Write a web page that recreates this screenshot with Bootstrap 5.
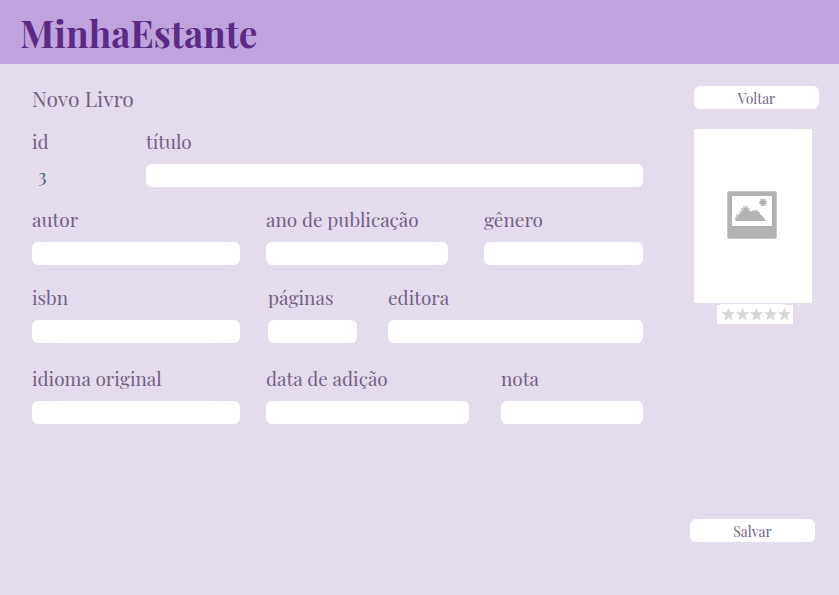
<!DOCTYPE html>
<html lang="pt-BR">
<head>
<meta charset="utf-8">
<meta name="viewport" content="width=device-width, initial-scale=1">
<title>MinhaEstante - Novo Livro</title>
<link href="https://cdn.jsdelivr.net/npm/bootstrap@5.3.0/dist/css/bootstrap.min.css" rel="stylesheet">
<style>
  body { background: #e4dcec; color: #735f86; font-family: "Playfair Display", "Liberation Serif", serif; }
  .topbar { background: #bfa3dc; padding: 3px 20px 1px; }
  .brand { color: #5b2a86; font-size: 37px; line-height: 60px; font-weight: 700; text-decoration: none; }
  .page { padding: 22px 20px 24px 32px; gap: 47px; }
  .page-title { font-size: 21px; line-height: 24px; margin-bottom: 18px; font-weight: 400; }
  .form-line { display: grid; margin-bottom: 19px; }
  .form-line > :nth-child(2) { grid-column: 3; }
  .form-line > :nth-child(3) { grid-column: 5; }
  .line-title { grid-template-columns: 88fr 26fr 497fr; }
  .line-author { grid-template-columns: 208fr 26fr 182fr 36fr 159fr; }
  .line-isbn { grid-template-columns: 208fr 28fr 89fr 31fr 255fr; margin-bottom: 22px; }
  .line-lang { grid-template-columns: 208fr 26fr 203fr 32fr 142fr; }
  .form-line > div { min-width: 0; }
  .field-label { display: block; font-size: 19px; line-height: 26px; margin-bottom: 10px; white-space: nowrap; }
  .field { height: 23px; border: 0; border-radius: 6px; padding: 0 8px; font-size: 14px; color: inherit; }
  .book-id { display: block; font-size: 19px; line-height: 23px; color: #42627a; padding-left: 6px; height: 23px; }
  .side { width: 129px; }
  .side-btn { width: 125px; height: 23px; border: 0; border-radius: 6px; background: #fff; color: inherit; font-size: 14px; line-height: 23px; padding: 1px 0 0; }
  .side-btn:hover { background: #f6f1fa; color: inherit; }
  .cover { width: 118px; height: 174px; margin: 20px 0 1px 4px; padding: 0 2px 2px 0; }
  .rating { margin: 0 0 195px 27px; }
</style>
</head>
<body>
<header class="topbar">
  <a class="brand d-block" href="#">MinhaEstante</a>
</header>
<form class="page d-flex align-items-start">
  <main class="flex-grow-1">
    <h1 class="page-title">Novo Livro</h1>
    <div class="form-line line-title">
      <div><label class="field-label" for="id">id</label><output class="book-id" id="id">3</output></div>
      <div><label class="field-label" for="titulo">título</label><input class="field form-control" type="text" id="titulo"></div>
    </div>
    <div class="form-line line-author">
      <div><label class="field-label" for="autor">autor</label><input class="field form-control" type="text" id="autor"></div>
      <div><label class="field-label" for="ano">ano de publicação</label><input class="field form-control" type="text" id="ano"></div>
      <div><label class="field-label" for="genero">gênero</label><input class="field form-control" type="text" id="genero"></div>
    </div>
    <div class="form-line line-isbn">
      <div><label class="field-label" for="isbn">isbn</label><input class="field form-control" type="text" id="isbn"></div>
      <div><label class="field-label" for="paginas">páginas</label><input class="field form-control" type="text" id="paginas"></div>
      <div><label class="field-label" for="editora">editora</label><input class="field form-control" type="text" id="editora"></div>
    </div>
    <div class="form-line line-lang">
      <div><label class="field-label" for="idioma">idioma original</label><input class="field form-control" type="text" id="idioma"></div>
      <div><label class="field-label" for="adicao">data de adição</label><input class="field form-control" type="text" id="adicao"></div>
      <div><label class="field-label" for="nota">nota</label><input class="field form-control" type="text" id="nota"></div>
    </div>
  </main>
  <aside class="side d-flex flex-column align-items-start flex-shrink-0">
    <button class="side-btn btn align-self-end" type="button">Voltar</button>
    <div class="cover bg-white d-flex align-items-center justify-content-center">
      <svg width="50" height="48" viewBox="0 0 50 48" aria-hidden="true">
        <rect width="50" height="48" rx="2" fill="#c9c9c9"/>
        <rect x="1" y="1" width="48" height="46" rx="1" fill="#b3b3b3"/>
        <rect x="5" y="5" width="40" height="30" fill="#fff"/>
        <path fill="#d2d2d2" d="M8 30v-4h1v-3h3v-3h2v-3h2v-2h5v2h2v3h2v-1h6v2h2v3h2v3h3v2h1v1z"/>
        <path fill="#b3b3b3" d="M9 30v-3l3-3 3-3 2-4h3l3 4h2l2-1h3l3 3 3 3 3 4z"/>
        <path fill="#d2d2d2" d="M32 10h1V8h6v2h1v3h-1v2h-6v-2h-1z"/>
        <path fill="#b3b3b3" d="M33 10h2V8h2v2h2v3h-2v2h-2v-2h-2z"/>
      </svg>
    </div>
    <svg class="rating d-block" width="76" height="20" viewBox="0 0 76 20" role="img" aria-label="Nota: 0 de 5">
      <path fill="#fff" d="M3 0h65v1h8v19H0V1h3z"/>
      <defs><path id="star" fill="#d5d5d5" d="M0-7L1.7-2.2 6.8-2.2 2.7.9 4.2 6 0 3-4.2 6-2.7.9-6.8-2.2-1.7-2.2z"/></defs>
      <use href="#star" x="11.5" y="10.5"/><use href="#star" x="25.5" y="10.5"/><use href="#star" x="39.5" y="10.5"/><use href="#star" x="53.5" y="10.5"/><use href="#star" x="67.5" y="10.5"/>
    </svg>
    <button class="side-btn btn" type="submit">Salvar</button>
  </aside>
</form>
<script src="https://cdn.jsdelivr.net/npm/bootstrap@5.3.0/dist/js/bootstrap.bundle.min.js"></script>
</body>
</html>
